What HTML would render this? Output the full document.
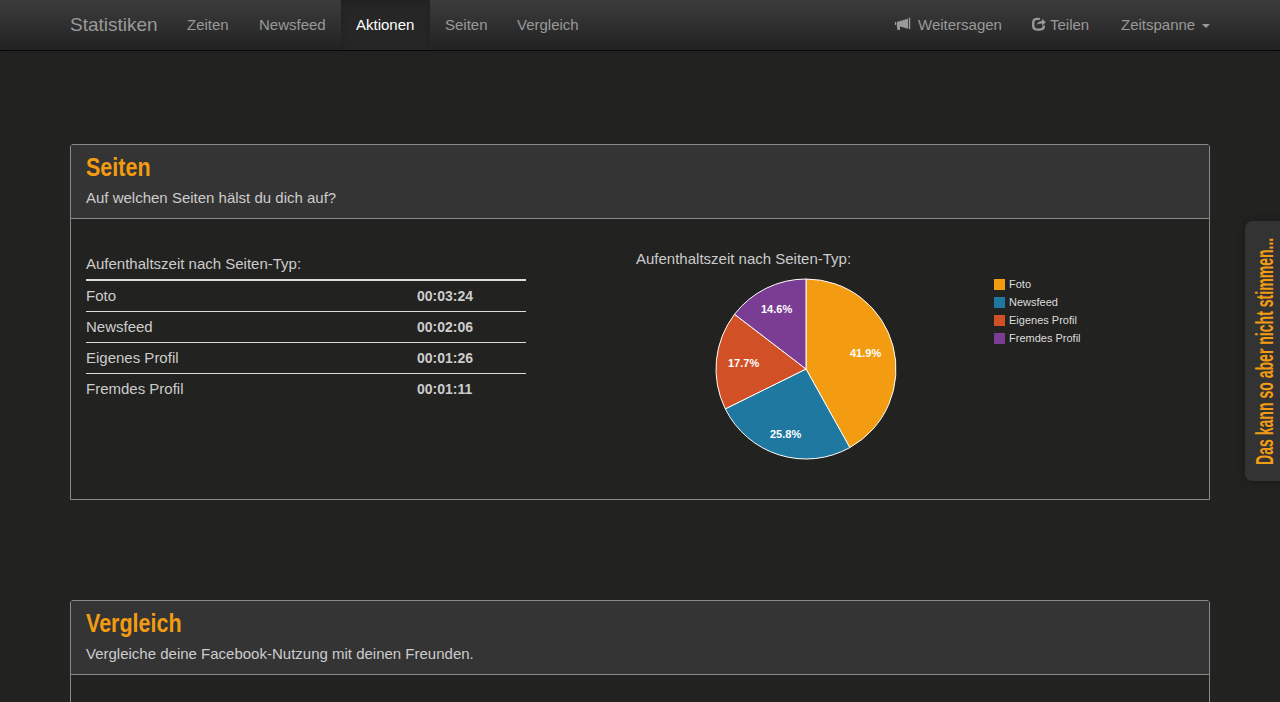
<!DOCTYPE html>
<html><head><meta charset="utf-8">
<style>
*{box-sizing:border-box;margin:0;padding:0}
html,body{width:1280px;height:702px;overflow:hidden}
body{background:#222220;font-family:"Liberation Sans",sans-serif;color:#ccc;position:relative}
.nav{position:absolute;left:0;top:0;width:1280px;height:51px;background:linear-gradient(#3c3c3c,#222);border-bottom:1px solid #080808;box-shadow:0 1px 10px rgba(0,0,0,.1);z-index:2}
.nav span{position:absolute;top:0;line-height:50px;font-size:15px;color:#999;white-space:nowrap}
.nav .brand{font-size:19px;color:#999}
.nav .active{background:#262626;color:#fff;height:50px;box-shadow:inset 0 3px 8px rgba(0,0,0,.15)}
.panel{position:absolute;left:70px;width:1140px;border:1px solid #8a8a8a;border-radius:3px 3px 0 0;background:#222220}
.panel .hd{background:#343434;border-bottom:1px solid #8a8a8a;height:74px;position:relative}
.panel h2{position:absolute;left:15px;top:8px;font-size:25px;color:#f39c12;font-weight:bold;transform:scaleX(0.86);transform-origin:0 0;white-space:nowrap}
.panel p{position:absolute;left:15px;top:44px;font-size:15px;color:#ccc}
.t{position:absolute;font-size:15px;color:#ccc;white-space:nowrap}
.b{font-weight:bold;font-size:14px;margin-top:1px}
.hl{position:absolute;left:86px;width:440px;height:1px;background:#ddd}
.side{position:absolute;left:1245px;top:221px;width:45px;height:260px;background:#333;border-radius:7px 0 0 7px;box-shadow:0 0 8px rgba(0,0,0,.35)}
.side span{position:absolute;left:8px;top:244px;transform-origin:0 0;transform:rotate(-90deg) scaleX(0.611);font-size:23px;font-weight:bold;line-height:24px;color:#f39c12;white-space:nowrap}
.lg{position:absolute;font-size:11px;color:#ccc;white-space:nowrap}
.sw{position:absolute;width:10px;height:10px}
</style></head><body>
<div class="nav">
  <span class="brand" style="left:70px">Statistiken</span>
  <span style="left:187px">Zeiten</span>
  <span style="left:259px">Newsfeed</span>
  <span class="active" style="left:341px;width:89px;padding-left:15px">Aktionen</span>
  <span style="left:445px">Seiten</span>
  <span style="left:517px">Vergleich</span>
  <svg style="position:absolute;left:890px;top:14px" width="24" height="20" viewBox="0 0 24 20"><rect x="4.9" y="8" width="1.1" height="3" fill="#999"/><path d="M6.8 8L18 4.7V14.8L10 12.4V16H7.5L6.8 12.2Z" fill="#999"/><rect x="18.8" y="3.7" width="1.4" height="11.4" fill="#999"/></svg>
  <span style="left:918px">Weitersagen</span>
  <svg style="position:absolute;left:1028px;top:14px" width="22" height="20" viewBox="0 0 22 20"><path d="M11.8 4.9H9.2C6.6 4.9 5.2 6.3 5.2 8.9V11.6C5.2 14.2 6.6 15.6 9.2 15.6H11.9C14.5 15.6 15.9 14.2 15.9 11.6V11.4" fill="none" stroke="#999" stroke-width="2.4"/><path d="M9 10.6C9.4 8.2 11.3 6.9 14 6.9V4.7L17.8 8.2L14 11.7V9.4C12.2 9.4 10.6 9.8 9 10.6Z" fill="#999"/></svg>
  <span style="left:1050px">Teilen</span>
  <span style="left:1121px">Zeitspanne</span>
  <svg style="position:absolute;left:1202px;top:24px" width="8" height="4" viewBox="0 0 8 4"><path d="M0 0h8L4 4z" fill="#999"/></svg>
</div>

<div class="panel" style="top:144px;height:356px">
  <div class="hd"><h2>Seiten</h2><p>Auf welchen Seiten hälst du dich auf?</p></div>
</div>
<div class="t" style="left:86px;top:255px">Aufenthaltszeit nach Seiten-Typ:</div>
<div class="hl" style="top:279px;height:2px"></div>
<div class="t" style="left:86px;top:287px">Foto</div><div class="t b" style="left:417px;top:287px">00:03:24</div>
<div class="hl" style="top:311px"></div>
<div class="t" style="left:86px;top:318px">Newsfeed</div><div class="t b" style="left:417px;top:318px">00:02:06</div>
<div class="hl" style="top:342px"></div>
<div class="t" style="left:86px;top:349px">Eigenes Profil</div><div class="t b" style="left:417px;top:349px">00:01:26</div>
<div class="hl" style="top:373px"></div>
<div class="t" style="left:86px;top:380px">Fremdes Profil</div><div class="t b" style="left:417px;top:380px">00:01:11</div>

<div class="t" style="left:636px;top:250px">Aufenthaltszeit nach Seiten-Typ:</div>
<svg style="position:absolute;left:0;top:0" width="1280" height="702">
<g stroke="#fff" stroke-width="1" stroke-linejoin="round">
<path d="M806 369L806.00 279.00A90 90 0 0 1 849.85 447.59Z" fill="#f39c12"/>
<path d="M806 369L849.85 447.59A90 90 0 0 1 725.30 408.85Z" fill="#1e78a0"/>
<path d="M806 369L725.30 408.85A90 90 0 0 1 734.54 314.29Z" fill="#d15026"/>
<path d="M806 369L734.54 314.29A90 90 0 0 1 806.00 279.00Z" fill="#7b3d93"/>
</g>
<g font-family="Liberation Sans" font-weight="bold" font-size="11" fill="#fff">
<text x="850" y="357">41.9%</text>
<text x="761" y="313">14.6%</text>
<text x="728" y="367">17.7%</text>
<text x="770" y="438">25.8%</text>
</g>
<rect x="994" y="279" width="11" height="11" fill="#f39c12"/>
<rect x="994" y="297" width="11" height="11" fill="#1e78a0"/>
<rect x="994" y="315" width="11" height="11" fill="#d15026"/>
<rect x="994" y="333" width="11" height="11" fill="#7b3d93"/>
<g font-family="Liberation Sans" font-size="11" fill="#ddd">
<text x="1009" y="288">Foto</text>
<text x="1009" y="306">Newsfeed</text>
<text x="1009" y="324">Eigenes Profil</text>
<text x="1009" y="342">Fremdes Profil</text>
</g>
</svg>

<div class="panel" style="top:600px;height:120px">
  <div class="hd"><h2>Vergleich</h2><p>Vergleiche deine Facebook-Nutzung mit deinen Freunden.</p></div>
</div>

<div class="side"><span>Das kann so aber nicht stimmen...</span></div>
</body></html>
